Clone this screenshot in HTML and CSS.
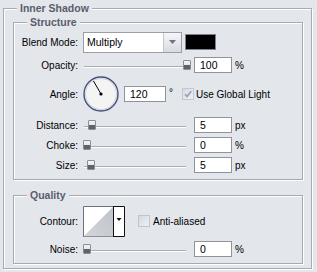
FILE: index.html
```html
<!DOCTYPE html>
<html>
<head>
<meta charset="utf-8">
<link rel="stylesheet" href="styles.css">
</head>
<body>
<div class="group outer">
  <span class="legend">Inner Shadow</span>
  <div class="group structure">
    <span class="legend">Structure</span>
    <div class="row row-blend">
      <span class="lbl">Blend Mode:</span>
      <div class="select">
        <span class="select-text">Multiply</span>
        <span class="select-btn"><svg width="7" height="4" viewBox="0 0 7 4"><path d="M0 0H7L3.5 4Z" fill="#70747c"/></svg></span>
      </div>
      <span class="swatch"></span>
    </div>
    <div class="row row-opacity">
      <span class="lbl">Opacity:</span>
      <div class="slider"><span class="track"></span><span class="thumb" style="left:100px"></span></div>
      <span class="field">100</span><span class="unit">%</span>
    </div>
    <div class="row row-angle">
      <span class="lbl">Angle:</span>
      <svg class="dial" width="36" height="36" viewBox="0 0 36 36">
        <circle cx="18" cy="18" r="17" fill="#f4f4f3" stroke="#45527c" stroke-width="1.4"/>
        <circle cx="18" cy="18" r="15.6" fill="none" stroke="#cdd2de" stroke-width="1"/>
        <line x1="18" y1="18" x2="10.5" y2="5" stroke="#000" stroke-width="1"/>
        <circle cx="18" cy="18" r="1.6" fill="#000"/>
      </svg>
      <span class="field field-angle">120</span><span class="deg">°</span>
      <svg class="check" width="12" height="12" viewBox="0 0 12 12">
        <defs><linearGradient id="cg" x1="0" y1="0" x2="1" y2="1"><stop offset="0" stop-color="#d6dae2"/><stop offset="1" stop-color="#eef0f4"/></linearGradient></defs>
        <rect x="0.5" y="0.5" width="11" height="11" fill="url(#cg)" stroke="#c3c7cf"/>
        <path d="M3 6.2L5 8.5L9.2 3.2" stroke="#98a1b6" stroke-width="1.7" fill="none"/>
      </svg>
      <span class="check-text">Use Global Light</span>
    </div>
    <div class="row row-distance">
      <span class="lbl">Distance:</span>
      <div class="slider"><span class="track"></span><span class="thumb" style="left:5px"></span></div>
      <span class="field">5</span><span class="unit">px</span>
    </div>
    <div class="row row-choke">
      <span class="lbl">Choke:</span>
      <div class="slider"><span class="track"></span><span class="thumb" style="left:0px"></span></div>
      <span class="field">0</span><span class="unit">%</span>
    </div>
    <div class="row row-size">
      <span class="lbl">Size:</span>
      <div class="slider"><span class="track"></span><span class="thumb" style="left:4px"></span></div>
      <span class="field">5</span><span class="unit">px</span>
    </div>
  </div>
  <div class="group quality">
    <span class="legend">Quality</span>
    <div class="row row-contour">
      <span class="lbl">Contour:</span>
      <svg class="contour" width="42" height="31" viewBox="0 0 42 31">
        <defs><linearGradient id="tg" x1="0" y1="1" x2="1" y2="0"><stop offset="0" stop-color="#d2d5da"/><stop offset="1" stop-color="#bfc3ca"/></linearGradient></defs>
        <rect x="0" y="0" width="42" height="31" fill="#fff"/>
        <polygon points="1,30 30,1 30,30" fill="url(#tg)"/>
        <path d="M0.5 31V0.5H30" stroke="#6e7178" fill="none"/>
        <path d="M30 0.5H41.5V30.5H30" stroke="#111" fill="none"/>
        <line x1="30.5" y1="0" x2="30.5" y2="31" stroke="#111"/>
        <line x1="1" y1="30.5" x2="30" y2="30.5" stroke="#8d9097"/>
        <path d="M33.5 12H38.5L36 15Z" fill="#111"/>
      </svg>
      <svg class="check check-aa" width="12" height="12" viewBox="0 0 12 12">
        <defs><linearGradient id="ag" x1="0" y1="0" x2="1" y2="1"><stop offset="0" stop-color="#d3d7de"/><stop offset="1" stop-color="#eff1f4"/></linearGradient></defs>
        <rect x="0.5" y="0.5" width="11" height="11" fill="url(#ag)" stroke="#c0c4cc"/>
      </svg>
      <span class="check-text">Anti-aliased</span>
    </div>
    <div class="row row-noise">
      <span class="lbl">Noise:</span>
      <div class="slider"><span class="track"></span><span class="thumb" style="left:0px"></span></div>
      <span class="field">0</span><span class="unit">%</span>
    </div>
  </div>
</div>
</body>
</html>
```
FILE: styles.css
```css
* { box-sizing: border-box; }
html, body { margin: 0; }
body {
  background: #e3e6eb;
  width: 317px;
  height: 272px;
  overflow: hidden;
  font-family: "Liberation Sans", Arial, sans-serif;
  font-size: 10px;
  color: #000;
}
.group {
  position: relative;
  border: 1px solid #a6aab3;
  box-shadow: inset 1px 1px 0 #fff, 1px 1px 0 #fff;
}
.outer {
  margin: 8px 0 0 3px;
  width: 309px;
  padding: 13px 8px 4px 9px;
}
.legend {
  position: absolute;
  top: -7px;
  left: 13px;
  padding: 0 3px;
  background: #e3e6eb;
  font-weight: bold;
  font-size: 10.5px;
  line-height: 13px;
  color: #5a5e6b;
}
.structure { padding: 8px 0 6px 0; }
.quality { margin-top: 15px; padding: 10px 0 6px 0; }
.row {
  display: flex;
  align-items: center;
  height: 16px;
}
.lbl {
  flex: none;
  width: 64px;
  margin-right: 5px;
  text-align: right;
  white-space: nowrap;
}
.row-blend { height: 22px; }
.row-opacity { margin-top: 4px; }
.row-angle { height: 36px; margin-top: 3px; }
.row-distance { margin-top: 5px; }
.row-choke, .row-size { margin-top: 4px; }
.row-contour { height: 30px; }
.row-noise { margin-top: 5px; }

.select {
  flex: none;
  display: flex;
  width: 99px;
  height: 21px;
  border: 1px solid #9a9ea7;
  background: #fff;
}
.select-text {
  flex: 1;
  padding-left: 3px;
  line-height: 19px;
  font-size: 10.5px;
}
.select-btn {
  width: 18px;
  border-left: 1px solid #c4c7ce;
  background: linear-gradient(#f5f6f8, #d8dbe1);
  display: flex;
  align-items: center;
  justify-content: center;
}
.swatch {
  flex: none;
  width: 31px;
  height: 16px;
  margin-left: 3px;
  background: #000;
  border: 1px solid #7d8088;
}
.slider {
  flex: none;
  position: relative;
  width: 108px;
  height: 16px;
}
.track {
  display: block;
  margin: 9px 0 0 1px;
  width: 102px;
  height: 2px;
  border-top: 1px solid #a9acb4;
  background: #fff;
}
.thumb {
  position: absolute;
  top: 3px;
  width: 8px;
  height: 10px;
  border: 1px solid #8a8e96;
  border-radius: 1px;
  background: linear-gradient(#f3f4f6 0, #e6e8ec 55%, #5f6268 55%);
}
.field {
  flex: none;
  width: 38px;
  height: 16px;
  margin-left: 3px;
  border: 1px solid #8f949c;
  background: #fff;
  padding-left: 5px;
  line-height: 14px;
  font-size: 10.5px;
}
.unit { margin-left: 3px; }
.dial { flex: none; }
.field-angle { width: 42px; margin-left: 5px; }
.deg { width: 13px; margin-left: 3px; margin-top: -4px; }
.check { flex: none; }
.check-text { margin-left: 2px; white-space: nowrap; }
.contour { flex: none; }
.check-aa { margin-left: 13px; }
.row-contour .check-text { margin-left: 3px; }
```
